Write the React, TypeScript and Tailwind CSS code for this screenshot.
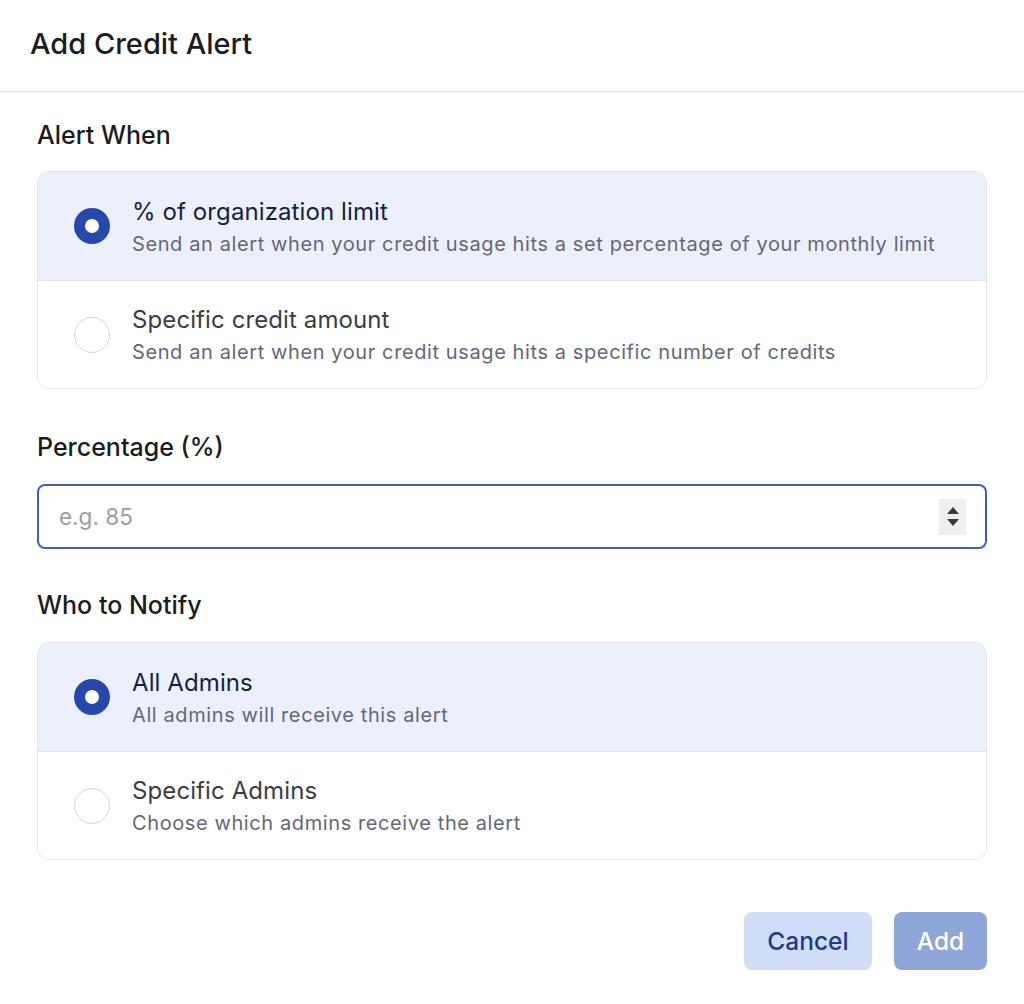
import React, { useState } from "react";

type Option = { id: string; title: string; desc: string };

const alertOptions: Option[] = [
  {
    id: "percent",
    title: "% of organization limit",
    desc: "Send an alert when your credit usage hits a set percentage of your monthly limit",
  },
  {
    id: "amount",
    title: "Specific credit amount",
    desc: "Send an alert when your credit usage hits a specific number of credits",
  },
];

const notifyOptions: Option[] = [
  { id: "all", title: "All Admins", desc: "All admins will receive this alert" },
  { id: "specific", title: "Specific Admins", desc: "Choose which admins receive the alert" },
];

function RadioGroup({
  options,
  value,
  onChange,
}: {
  options: Option[];
  value: string;
  onChange: (v: string) => void;
}) {
  return (
    <div className="border border-[#e3e4e8] rounded-[12px] overflow-hidden">
      {options.map((opt, i) => {
        const selected = opt.id === value;
        return (
          <div
            key={opt.id}
            onClick={() => onChange(opt.id)}
            className={`flex items-center h-[108px] pl-[36px] cursor-pointer ${
              i > 0 ? "border-t border-[#e3e4e8]" : ""
            } ${selected ? "bg-[#ecf0fc]" : "bg-white"}`}
          >
            {selected ? (
              <div className="w-[36px] h-[36px] rounded-full bg-[#2747ad] flex items-center justify-center shrink-0">
                <div className="w-[14px] h-[14px] rounded-full bg-white" />
              </div>
            ) : (
              <div className="w-[36px] h-[36px] rounded-full border border-[#d4d4d8] bg-white shrink-0" />
            )}
            <div className="ml-[22px] pt-[3px] flex flex-col">
              <p
                className={`text-[24px] leading-[32px] tracking-[0.1px] ${
                  selected ? "text-[#131f45]" : "text-[#3c3c44]"
                }`}
              >
                {opt.title}
              </p>
              <p className="text-[20px] leading-[32px] tracking-[0.6px] text-[#66667a]">
                {opt.desc}
              </p>
            </div>
          </div>
        );
      })}
    </div>
  );
}

export default function App() {
  const [alertWhen, setAlertWhen] = useState("percent");
  const [notify, setNotify] = useState("all");

  return (
    <div
      className="w-[1024px] h-[1004px] bg-white text-[#1c1c1f]"
      style={{ fontFamily: "Inter, 'Noto Sans', sans-serif" }}
    >
      <div className="h-[92px] border-b border-[#e3e4e8] flex items-center px-[30px] pb-[4px] shadow-[0_1px_2px_rgba(0,0,0,0.04)]">
        <h1 className="text-[29px] font-medium text-[#1c1c1f]">Add Credit Alert</h1>
      </div>

      <div className="px-[37px] pt-[27px]">
        <h2 className="text-[25px] font-medium leading-[32px] mb-[20px]">Alert When</h2>
        <RadioGroup options={alertOptions} value={alertWhen} onChange={setAlertWhen} />

        <h2 className="text-[25px] font-medium leading-[32px] mt-[42px] mb-[21px]">
          Percentage (%)
        </h2>
        <div className="h-[65px] border-2 border-[#3f5fc0] rounded-[8px] flex items-center pl-[20px] pr-[19px]">
          <input
            type="text"
            placeholder="e.g. 85"
            className="flex-1 outline-none text-[22.5px] placeholder:text-[#9b9ba6] bg-transparent"
          />
          <div className="w-[27px] h-[36px] bg-[#efefef] flex flex-col items-center justify-center gap-[5px]">
            <svg width="12" height="7" viewBox="0 0 12 7">
              <path d="M6 0 L12 7 L0 7 Z" fill="#3a3a3a" />
            </svg>
            <svg width="12" height="7" viewBox="0 0 12 7">
              <path d="M0 0 L12 0 L6 7 Z" fill="#3a3a3a" />
            </svg>
          </div>
        </div>

        <h2 className="text-[25px] font-medium leading-[32px] mt-[40px] mb-[21px]">
          Who to Notify
        </h2>
        <RadioGroup options={notifyOptions} value={notify} onChange={setNotify} />

        <div className="flex justify-end gap-[22px] mt-[52px]">
          <button className="w-[128px] h-[58px] rounded-[8px] bg-[#d0ddf7] text-[#1f3a8c] text-[24.5px] font-medium">
            Cancel
          </button>
          <button className="w-[93px] h-[58px] rounded-[8px] bg-[#8fa6d9] text-white text-[24.5px] font-medium">
            Add
          </button>
        </div>
      </div>
    </div>
  );
}
